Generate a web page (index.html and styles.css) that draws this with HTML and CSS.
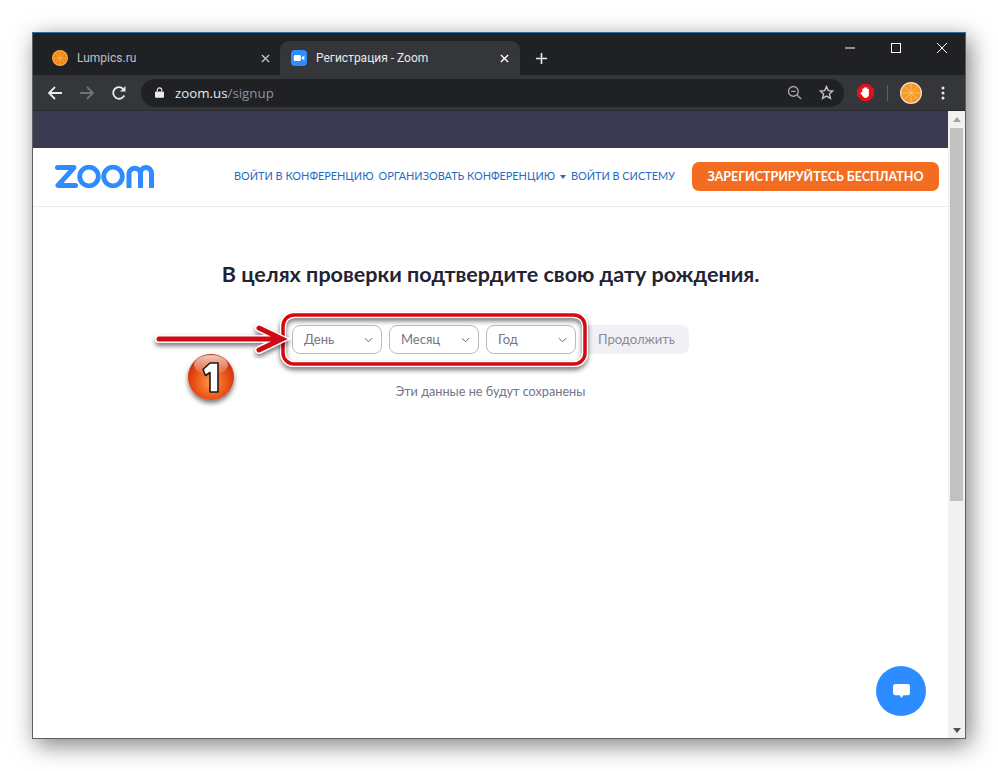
FILE: index.html
```html
<!DOCTYPE html>
<html lang="ru">
<head>
<meta charset="utf-8">
<title>Регистрация - Zoom</title>
<link rel="stylesheet" href="styles.css">
</head>
<body>
<div class="window">
  <div class="tabbar">
    <div class="tab">
      <svg class="favicon" viewBox="0 0 16 16"><circle cx="8" cy="8" r="8" fill="#f9a63c"/><circle cx="8" cy="8" r="6.6" fill="#f0880f"/><path d="M8 2v12M2 8h12M3.800 3.800l8.400 8.400M12.200 3.800l-8.400 8.400" stroke="#f9b45a" stroke-width=".7"/></svg>
      <span class="tab-title">Lumpics.ru</span>
      <svg class="tab-close" viewBox="0 0 10 10"><path d="M1 1l8 8M9 1l-8 8" stroke="#bdc1c6" stroke-width="1.500"/></svg>
    </div>
    <div class="tab tab-active">
      <svg class="favicon" viewBox="0 0 16 16"><rect width="16" height="16" rx="4" fill="#2d8cff"/><rect x="2.800" y="5" width="7" height="6" rx="1.200" fill="#fff"/><path d="M10.600 7.400l2.800-2v5.200l-2.800-2z" fill="#fff"/></svg>
      <span class="tab-title">Регистрация - Zoom</span>
      <svg class="tab-close" viewBox="0 0 10 10"><path d="M1 1l8 8M9 1l-8 8" stroke="#fff" stroke-width="1.500"/></svg>
    </div>
    <svg class="newtab" viewBox="0 0 14 14"><path d="M7 1v12M1 7h12" stroke="#e8eaed" stroke-width="1.700"/></svg>
    <div class="winctl">
      <svg class="ctl" viewBox="0 0 12 12"><path d="M1 6h10" stroke="#fff" stroke-width="1"/></svg>
      <svg class="ctl" viewBox="0 0 12 12"><rect x="1.500" y="1.500" width="9" height="9" fill="none" stroke="#fff" stroke-width="1"/></svg>
      <svg class="ctl" viewBox="0 0 12 12"><path d="M1 1l10 10M11 1L1 11" stroke="#fff" stroke-width="1"/></svg>
    </div>
  </div>
  <div class="toolbar">
    <svg class="tool" viewBox="0 0 16 16"><path d="M15 8H2M8 2L2 8l6 6" fill="none" stroke="#e8eaed" stroke-width="1.800"/></svg>
    <svg class="tool" viewBox="0 0 16 16"><path d="M1 8h13M8 2l6 6-6 6" fill="none" stroke="#6f7175" stroke-width="1.800"/></svg>
    <svg class="tool" viewBox="0 0 16 16"><path d="M13.200 10.500A5.800 5.800 0 1 1 12.300 4" fill="none" stroke="#e8eaed" stroke-width="1.800"/><path d="M14.500 1v5.600H9z" fill="#e8eaed"/></svg>
    <div class="omnibox">
      <svg class="lock" viewBox="0 0 10 12"><path d="M2.500 5V3.400a2.500 2.500 0 0 1 5 0V5" fill="none" stroke="#e8eaed" stroke-width="1.200"/><rect y="4.800" width="10" height="7" rx="1" fill="#e8eaed"/></svg>
      <span class="url"><span class="host">zoom.us</span>/signup</span>
      <svg class="omni-icon" viewBox="0 0 16 16"><circle cx="6.800" cy="6.800" r="5.200" fill="none" stroke="#a6a8ab" stroke-width="1.400"/><path d="M4.400 6.800h4.800M10.600 10.600l4.400 4.400" stroke="#a6a8ab" stroke-width="1.400"/></svg>
      <svg class="omni-icon" viewBox="0 0 16 16"><path d="M8 1.600l1.900 4.400 4.800.4-3.600 3.200 1.100 4.700L8 11.800l-4.200 2.500 1.100-4.700-3.600-3.200 4.800-.4z" fill="none" stroke="#c4c6c9" stroke-width="1.400"/></svg>
    </div>
    <svg class="stop" viewBox="0 0 18 18"><path d="M5.500 0h7L18 5.500v7L12.500 18h-7L0 12.500v-7z" fill="#e0121c"/><path d="M5.600 9V5.500a1 1 0 0 1 1.700-.5V4a1 1 0 0 1 1.800-.1 1 1 0 0 1 1.800.6v.8a1 1 0 0 1 1.700.6v5c0 2.300-1.400 3.800-3.400 3.800-1.600 0-2.500-.7-3.200-1.900L3.800 10c-.5-1 .8-1.900 1.800-1z" fill="#fff"/></svg>
    <span class="divider"></span>
    <svg class="avatar" viewBox="0 0 22 22"><circle cx="11" cy="11" r="11" fill="#fbe3c0"/><circle cx="11" cy="11" r="9.800" fill="#f39a27"/><path d="M11 2v18M2 11h18M4.600 4.600l12.800 12.800M17.400 4.600L4.600 17.400" stroke="#fbc779" stroke-width=".8"/></svg>
    <svg class="dots" viewBox="0 0 4 14"><circle cx="2" cy="2" r="1.500" fill="#e8eaed"/><circle cx="2" cy="7" r="1.500" fill="#e8eaed"/><circle cx="2" cy="12" r="1.500" fill="#e8eaed"/></svg>
  </div>
  <div class="viewport">
    <div class="page">
      <div class="band"></div>
      <header class="site-header">
        <svg class="logo" viewBox="0 0 99 23"><path d="M2.500 2.600H19L3 20.400H20.500" fill="none" stroke="#2d8cff" stroke-width="5" stroke-linejoin="round" stroke-linecap="round"/><circle cx="34" cy="11.500" r="9.300" fill="none" stroke="#2d8cff" stroke-width="4.800"/><circle cx="58" cy="11.500" r="9.300" fill="none" stroke="#2d8cff" stroke-width="4.800"/><path d="M74 23V8.300A5.800 5.800 0 0 1 85.500 8.300V23M85.500 8.300A5.500 5.800 0 0 1 96.500 8.300V23" fill="none" stroke="#2d8cff" stroke-width="5"/></svg>
        <nav class="nav">
          <a class="nav-link">ВОЙТИ В КОНФЕРЕНЦИЮ</a>
          <a class="nav-link">ОРГАНИЗОВАТЬ КОНФЕРЕНЦИЮ <i class="caret"></i></a>
          <a class="nav-link">ВОЙТИ В СИСТЕМУ</a>
        </nav>
        <a class="signup">ЗАРЕГИСТРИРУЙТЕСЬ БЕСПЛАТНО</a>
      </header>
      <main class="content">
        <h1 class="title">В целях проверки подтвердите свою дату рождения.</h1>
        <form class="date-row">
          <div class="select"><span>День</span><svg class="chev" viewBox="0 0 10 6"><path d="M1 1l4 4 4-4" fill="none" stroke="#5e6670" stroke-width="1.100"/></svg></div>
          <div class="select"><span>Месяц</span><svg class="chev" viewBox="0 0 10 6"><path d="M1 1l4 4 4-4" fill="none" stroke="#5e6670" stroke-width="1.100"/></svg></div>
          <div class="select"><span>Год</span><svg class="chev" viewBox="0 0 10 6"><path d="M1 1l4 4 4-4" fill="none" stroke="#5e6670" stroke-width="1.100"/></svg></div>
          <div class="continue">Продолжить</div>
        </form>
        <p class="note">Эти данные не будут сохранены</p>
      </main>
      <button class="chat" type="button"><svg viewBox="0 0 18 16"><path d="M2.500 0h13A2.500 2.500 0 0 1 18 2.500v7a2.500 2.500 0 0 1-2.500 2.500H11l-2 3-2-3H2.500A2.500 2.500 0 0 1 0 9.500v-7A2.500 2.500 0 0 1 2.500 0z" fill="#fff"/></svg></button>
    </div>
    <div class="scrollbar">
      <i class="sb-up"></i>
      <div class="sb-track"><div class="sb-thumb"></div></div>
      <i class="sb-down"></i>
    </div>
  </div>
</div>
<svg class="annotation" viewBox="0 0 998 771">
  <defs>
    <filter id="sh" x="-10%" y="-30%" width="120%" height="170%"><feDropShadow dx="0" dy="3" stdDeviation="2.500" flood-color="#000" flood-opacity=".55"/></filter>
    <radialGradient id="ball" cx=".5" cy=".62" r=".62"><stop offset="0" stop-color="#ff9a4a"/><stop offset=".55" stop-color="#ee5518"/><stop offset="1" stop-color="#c22a08"/></radialGradient>
    <linearGradient id="gloss" x1="0" y1="0" x2="0" y2="1"><stop offset="0" stop-color="#fff" stop-opacity=".75"/><stop offset="1" stop-color="#fff" stop-opacity=".05"/></linearGradient>
  </defs>
  <rect x="283" y="315" width="302" height="49" rx="11" fill="none" stroke="#fff" stroke-width="6" filter="url(#sh)"/>
  <rect x="283" y="315" width="302" height="49" rx="11" fill="none" stroke="#d40a10" stroke-width="3.500"/>
  <path d="M159 339H276M259 328l23 11-23 11" fill="none" stroke="#fff" stroke-width="7.500" stroke-linecap="round" filter="url(#sh)"/>
  <path d="M159 339H276M259 328l23 11-23 11" fill="none" stroke="#cf0a14" stroke-width="5" stroke-linecap="round"/>
  <circle cx="211" cy="377" r="23" fill="url(#ball)" filter="url(#sh)"/>
  <ellipse cx="211" cy="365" rx="17" ry="10" fill="url(#gloss)"/>
  <path d="M203 369.500l7-6.500h8v29h-8v-19.500l-4.500 3z" fill="#fff" stroke="#1c1c1c" stroke-width="1.600" stroke-linejoin="round"/>
</svg>
</body>
</html>
```
FILE: styles.css
```css
html, body { margin: 0; padding: 0; }
body { width: 998px; height: 771px; overflow: hidden; background: #fff; position: relative; font-family: "Lato", "Liberation Sans", sans-serif; }

.window { width: 934px; height: 707px; margin: 32px 0 0 32px; box-sizing: border-box; border: 1px solid #5c5f63; border-top-color: #2a6ea8; box-shadow: 4px 6px 22px rgba(0,0,0,.5); display: flex; flex-direction: column; overflow: hidden; }

.tabbar { height: 42px; flex: none; background: #202124; display: flex; align-items: flex-end; position: relative; }
.tab { width: 247px; height: 34px; box-sizing: border-box; padding: 0 10px 0 19px; display: flex; align-items: center; font-family: "Roboto", "Noto Sans", sans-serif; font-size: 12px; color: #bdc1c6; }
.tab-active { width: 240px; background: #35363a; border-radius: 9px 9px 0 0; color: #e8eaed; padding-left: 11px; padding-right: 11px; }
.favicon { width: 16px; height: 16px; flex: none; margin-right: 9px; }
.tab-title { flex: 1; white-space: nowrap; }
.tab-close { width: 9px; height: 9px; flex: none; }
.newtab { width: 13px; height: 13px; margin: 0 0 10px 15px; flex: none; }
.winctl { position: absolute; top: 9px; right: 17px; display: flex; gap: 34px; }
.ctl { width: 12px; height: 12px; display: block; }

.toolbar { height: 36px; flex: none; box-sizing: border-box; background: #35363a; border-bottom: 1px solid #2a2b2e; display: flex; align-items: center; padding-left: 14px; }
.tool { width: 16px; height: 16px; flex: none; margin-right: 16px; }
.omnibox { width: 703px; height: 28px; flex: none; margin-left: -2px; background: #202124; border-radius: 14px; display: flex; align-items: center; padding: 0 10px 0 14px; box-sizing: border-box; }
.lock { width: 9px; height: 11px; flex: none; margin-right: 11px; }
.url { flex: 1; font-family: "Open Sans", "Noto Sans", sans-serif; font-size: 13.300px; color: #8f9399; }
.host { color: #e8eaed; }
.omni-icon { width: 15px; height: 15px; flex: none; margin-left: 17px; }
.stop { width: 17px; height: 17px; flex: none; margin-left: 13px; }
.divider { width: 1px; height: 16px; background: #5f6166; margin: 0 12px 0 13px; flex: none; }
.avatar { width: 22px; height: 22px; flex: none; }
.dots { width: 4px; height: 14px; flex: none; margin-left: 19px; }

.viewport { flex: 1; display: flex; min-height: 0; }
.page { width: 915px; flex: none; background: #fff; position: relative; }
.band { height: 37px; background: #3a3b50; }
.site-header { height: 59px; box-sizing: border-box; border-bottom: 1px solid #ececf0; display: flex; align-items: center; padding: 0 9px 0 22px; }
.logo { width: 99px; height: 23px; flex: none; margin-right: 80px; margin-top: -2px; }
.nav { display: flex; gap: 5px; flex: 1; margin-top: -4px; }
.nav-link { font-size: 10.900px; color: #1f6bc4; white-space: nowrap; }
.caret { display: inline-block; width: 0; height: 0; border: 3.500px solid transparent; border-top: 4px solid #1f6bc4; border-bottom: 0; vertical-align: middle; margin-left: 2px; }
.signup { width: 247px; height: 29px; flex: none; margin-top: -2px; border-radius: 7px; background: #f26d21; color: #fff; font-size: 12.500px; font-weight: 700; display: flex; align-items: center; justify-content: center; }

.content { display: flex; flex-direction: column; align-items: center; }
.title { margin: 54px 0 0; font-size: 21.550px; line-height: 26px; font-weight: 700; color: #232333; }
.date-row { display: flex; gap: 7px; margin: 38px 0 0; }
.select { width: 90px; height: 29px; box-sizing: border-box; border: 1px solid #babac6; border-radius: 8px; display: flex; align-items: center; justify-content: space-between; padding: 0 8px 2px 11px; font-size: 13px; color: #747487; }
.chev { width: 9px; height: 6px; margin-top: 2px; }
.continue { width: 105px; height: 29px; margin-left: 1px; box-sizing: border-box; padding-bottom: 2px; border-radius: 8px; background: #f1f1f5; color: #8a8a98; font-size: 13px; display: flex; align-items: center; justify-content: center; }
.note { margin: 29px 0 0; font-size: 12.700px; line-height: 16px; color: #747487; }

.chat { position: absolute; left: 843px; top: 555px; width: 50px; height: 50px; border: 0; padding: 0; border-radius: 50%; background: #2d8cff; display: flex; align-items: center; justify-content: center; }
.chat svg { width: 17px; height: 15px; }

.scrollbar { flex: 1; background: #f1f1f1; display: flex; flex-direction: column; align-items: center; }
.sb-up { width: 0; height: 0; margin: 6px 0 6px; border: 4px solid transparent; border-bottom: 5px solid #a3a3a3; border-top: 0; }
.sb-track { flex: 1; width: 100%; box-sizing: border-box; padding: 0 2px; }
.sb-thumb { height: 373px; background: #c1c1c1; }
.sb-down { width: 0; height: 0; margin: 6px 0 5px; border: 4px solid transparent; border-top: 5px solid #505050; border-bottom: 0; }

.annotation { position: absolute; left: 0; top: 0; width: 998px; height: 771px; pointer-events: none; }
```
